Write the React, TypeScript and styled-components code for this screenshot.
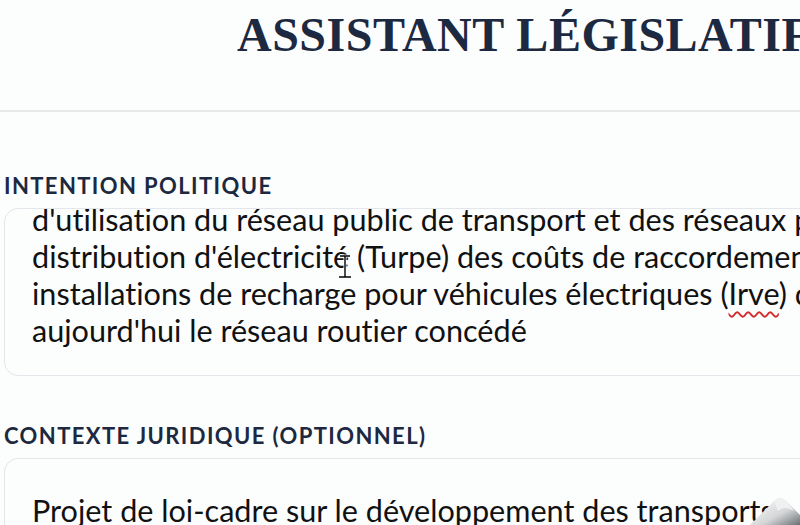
import React from 'react';
import styled, { createGlobalStyle } from 'styled-components';

/*
 * Global
*/
const GlobalStyle = createGlobalStyle`
    html, body {
        margin: 0;
        padding: 0;
        background: #fcfdfd;
        overflow: hidden;
    }
`;

/*
 * Styling
*/
const Page = styled.div`
    width: 800px;
    height: 525px;
    overflow: hidden;
    position: relative;
    font-family: Lato, "Noto Sans", sans-serif;
    font-variant-ligatures: none;
`;

const Header = styled.header`
    height: 112px;
    box-sizing: border-box;
    padding: 11px 0 0 237px;
    border-bottom: 2px solid #e6e8ea;
    white-space: nowrap;
`;

const Title = styled.h1`
    margin: 0;
    font-family: "Liberation Serif", "DejaVu Serif", serif;
    font-weight: 700;
    font-size: 48px;
    line-height: 48px;
    letter-spacing: 0.5px;
    color: #1c2940;
`;

const Main = styled.main`
    display: flex;
    flex-direction: column;
    padding: 61px 0 0 4px;
`;

const Field = styled.section`
    display: flex;
    flex-direction: column;
    gap: 9px;
    margin-bottom: 47px;
`;

const Label = styled.label`
    font-weight: 700;
    font-size: 22px;
    line-height: 26px;
    letter-spacing: 1.4px;
    color: #1c2940;
    white-space: nowrap;
`;

const TextBox = styled.div<{ $height: number; $align: 'start' | 'end' }>`
    width: 1100px;
    height: ${(p) => p.$height}px;
    box-sizing: border-box;
    display: flex;
    flex-direction: column;
    justify-content: ${(p) => (p.$align === 'end' ? 'flex-end' : 'flex-start')};
    overflow: hidden;
    padding: ${(p) => (p.$align === 'end' ? '0 0 26px 27px' : '33px 0 0 27px')};
    border: 1.5px solid #e3e6ea;
    border-radius: 14px;
    background: #fcfdfd;
    font-size: 30.6px;
    line-height: 37px;
    color: #111;
    white-space: nowrap;
`;

const Line = styled.div``;

const Misspelled = styled.span`
    text-decoration: underline wavy #d42a2a;
    text-decoration-thickness: 1.5px;
    text-underline-offset: 6px;
`;

const Cursor = styled.svg`
    position: absolute;
    left: 338px;
    top: 252px;
`;

const PageCurl = styled.svg`
    position: absolute;
    right: 0;
    bottom: 0;
`;

/*
 * Component
*/
const App: React.FC = () => {
    return (
        <>
            <GlobalStyle />
            <Page>
                <Header>
                    <Title>ASSISTANT LÉGISLATIF</Title>
                </Header>
                <Main>
                    <Field>
                        <Label>INTENTION POLITIQUE</Label>
                        <TextBox $height={168} $align="end">
                            <Line>Exclure de l'assiette du tarif</Line>
                            <Line>d'utilisation du réseau public de transport et des réseaux publics de</Line>
                            <Line>distribution d'électricité (Turpe) des coûts de raccordement des</Line>
                            <Line>
                                installations de recharge pour véhicules électriques (<Misspelled>Irve</Misspelled>) qui desservent
                            </Line>
                            <Line>aujourd'hui le réseau routier concédé</Line>
                        </TextBox>
                    </Field>
                    <Field>
                        <Label>CONTEXTE JURIDIQUE (OPTIONNEL)</Label>
                        <TextBox $height={168} $align="start">
                            <Line>Projet de loi-cadre sur le développement des transports</Line>
                        </TextBox>
                    </Field>
                </Main>
                <Cursor width="14" height="28" viewBox="0 0 14 28">
                    <path d="M2 4h10M7 4v21M1 25h12" stroke="#fff" strokeWidth="3" fill="none" />
                    <path d="M2 4h10M7 4v21M1 25h12" stroke="#000" strokeWidth="1.4" fill="none" />
                </Cursor>
                <PageCurl width="60" height="32" viewBox="0 0 60 32">
                    <defs>
                        <linearGradient id="curl" x1="0" y1="0" x2="1" y2="1">
                            <stop offset="0" stopColor="#ffffff" />
                            <stop offset="0.6" stopColor="#d4d6d8" />
                            <stop offset="1" stopColor="#6d7073" />
                        </linearGradient>
                    </defs>
                    <path d="M10 32 L34 8 Q40 2 46 8 L60 22 L60 32 Z" fill="url(#curl)" />
                    <path d="M34 8 Q40 2 46 8 L54 18 Q44 12 38 18 Z" fill="#eef0f1" />
                </PageCurl>
            </Page>
        </>
    );
};

export default App;
